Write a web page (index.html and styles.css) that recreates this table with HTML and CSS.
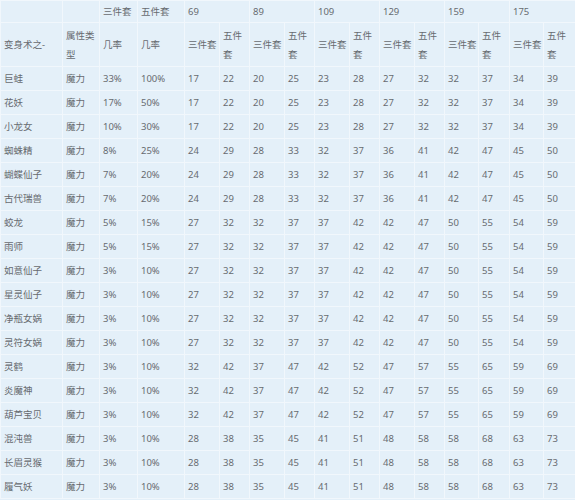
FILE: index.html
```html
<!DOCTYPE html>
<html>
<head>
<meta charset="utf-8">
<link rel="stylesheet" href="styles.css">
</head>
<body>
<table class="tbl">
<colgroup>
<col class="c-name"><col class="c-attr"><col class="c-p3"><col class="c-p5">
<col class="c-a"><col class="c-b"><col class="c-a"><col class="c-b"><col class="c-a"><col class="c-b"><col class="c-a"><col class="c-b">
<col class="c-c"><col class="c-d"><col class="c-c"><col class="c-e">
</colgroup>
<thead>
<tr class="h1">
<td></td><td></td><td>三件套</td><td>五件套</td>
<td colspan="2">69</td><td colspan="2">89</td><td colspan="2">109</td><td colspan="2">129</td><td colspan="2">159</td><td colspan="2">175</td>
</tr>
<tr class="h2">
<td>变身术之-</td><td>属性类型</td><td>几率</td><td>几率</td>
<td>三件套</td><td>五件套</td><td>三件套</td><td>五件套</td><td>三件套</td><td>五件套</td><td>三件套</td><td>五件套</td><td>三件套</td><td>五件套</td><td>三件套</td><td>五件套</td>
</tr>
</thead>
<tbody>
<tr><td>巨蛙</td><td>魔力</td><td>33%</td><td>100%</td><td>17</td><td>22</td><td>20</td><td>25</td><td>23</td><td>28</td><td>27</td><td>32</td><td>32</td><td>37</td><td>34</td><td>39</td></tr>
<tr><td>花妖</td><td>魔力</td><td>17%</td><td>50%</td><td>17</td><td>22</td><td>20</td><td>25</td><td>23</td><td>28</td><td>27</td><td>32</td><td>32</td><td>37</td><td>34</td><td>39</td></tr>
<tr><td>小龙女</td><td>魔力</td><td>10%</td><td>30%</td><td>17</td><td>22</td><td>20</td><td>25</td><td>23</td><td>28</td><td>27</td><td>32</td><td>32</td><td>37</td><td>34</td><td>39</td></tr>
<tr><td>蜘蛛精</td><td>魔力</td><td>8%</td><td>25%</td><td>24</td><td>29</td><td>28</td><td>33</td><td>32</td><td>37</td><td>36</td><td>41</td><td>42</td><td>47</td><td>45</td><td>50</td></tr>
<tr><td>蝴蝶仙子</td><td>魔力</td><td>7%</td><td>20%</td><td>24</td><td>29</td><td>28</td><td>33</td><td>32</td><td>37</td><td>36</td><td>41</td><td>42</td><td>47</td><td>45</td><td>50</td></tr>
<tr><td>古代瑞兽</td><td>魔力</td><td>7%</td><td>20%</td><td>24</td><td>29</td><td>28</td><td>33</td><td>32</td><td>37</td><td>36</td><td>41</td><td>42</td><td>47</td><td>45</td><td>50</td></tr>
<tr><td>蛟龙</td><td>魔力</td><td>5%</td><td>15%</td><td>27</td><td>32</td><td>32</td><td>37</td><td>37</td><td>42</td><td>42</td><td>47</td><td>50</td><td>55</td><td>54</td><td>59</td></tr>
<tr><td>雨师</td><td>魔力</td><td>5%</td><td>15%</td><td>27</td><td>32</td><td>32</td><td>37</td><td>37</td><td>42</td><td>42</td><td>47</td><td>50</td><td>55</td><td>54</td><td>59</td></tr>
<tr><td>如意仙子</td><td>魔力</td><td>3%</td><td>10%</td><td>27</td><td>32</td><td>32</td><td>37</td><td>37</td><td>42</td><td>42</td><td>47</td><td>50</td><td>55</td><td>54</td><td>59</td></tr>
<tr><td>星灵仙子</td><td>魔力</td><td>3%</td><td>10%</td><td>27</td><td>32</td><td>32</td><td>37</td><td>37</td><td>42</td><td>42</td><td>47</td><td>50</td><td>55</td><td>54</td><td>59</td></tr>
<tr><td>净瓶女娲</td><td>魔力</td><td>3%</td><td>10%</td><td>27</td><td>32</td><td>32</td><td>37</td><td>37</td><td>42</td><td>42</td><td>47</td><td>50</td><td>55</td><td>54</td><td>59</td></tr>
<tr><td>灵符女娲</td><td>魔力</td><td>3%</td><td>10%</td><td>27</td><td>32</td><td>32</td><td>37</td><td>37</td><td>42</td><td>42</td><td>47</td><td>50</td><td>55</td><td>54</td><td>59</td></tr>
<tr><td>灵鹤</td><td>魔力</td><td>3%</td><td>10%</td><td>32</td><td>42</td><td>37</td><td>47</td><td>42</td><td>52</td><td>47</td><td>57</td><td>55</td><td>65</td><td>59</td><td>69</td></tr>
<tr><td>炎魔神</td><td>魔力</td><td>3%</td><td>10%</td><td>32</td><td>42</td><td>37</td><td>47</td><td>42</td><td>52</td><td>47</td><td>57</td><td>55</td><td>65</td><td>59</td><td>69</td></tr>
<tr><td>葫芦宝贝</td><td>魔力</td><td>3%</td><td>10%</td><td>32</td><td>42</td><td>37</td><td>47</td><td>42</td><td>52</td><td>47</td><td>57</td><td>55</td><td>65</td><td>59</td><td>69</td></tr>
<tr><td>混沌兽</td><td>魔力</td><td>3%</td><td>10%</td><td>28</td><td>38</td><td>35</td><td>45</td><td>41</td><td>51</td><td>48</td><td>58</td><td>58</td><td>68</td><td>63</td><td>73</td></tr>
<tr><td>长眉灵猴</td><td>魔力</td><td>3%</td><td>10%</td><td>28</td><td>38</td><td>35</td><td>45</td><td>41</td><td>51</td><td>48</td><td>58</td><td>58</td><td>68</td><td>63</td><td>73</td></tr>
<tr><td>履气妖</td><td>魔力</td><td>3%</td><td>10%</td><td>28</td><td>38</td><td>35</td><td>45</td><td>41</td><td>51</td><td>48</td><td>58</td><td>58</td><td>68</td><td>63</td><td>73</td></tr>
</tbody>
</table>
</body>
</html>
```
FILE: styles.css
```css
html, body {
  margin: 0;
  padding: 0;
  background: #e4f0f9;
}
.tbl {
  width: 575px;
  table-layout: fixed;
  border-collapse: collapse;
  font-family: "Noto Sans", "Noto Sans CJK SC", sans-serif;
  font-size: 9.5px;
  color: #676b70;
  background: #e4f0f9;
}
.c-name { width: 62px; }
.c-attr { width: 37px; }
.c-p3 { width: 38px; }
.c-p5 { width: 47px; }
.c-a { width: 35px; }
.c-b { width: 30px; }
.c-c { width: 34px; }
.c-d { width: 31px; }
.c-e { width: 32px; }
.tbl td {
  border: 1px solid #f1f7fc;
  padding: 0 0 0 3px;
  text-align: left;
  vertical-align: middle;
  line-height: 17px;
  word-break: break-all;
}
.h1 td { height: 21px; }
.h2 td { height: 43px; line-height: 19px; }
tbody td { height: 23px; }
```
